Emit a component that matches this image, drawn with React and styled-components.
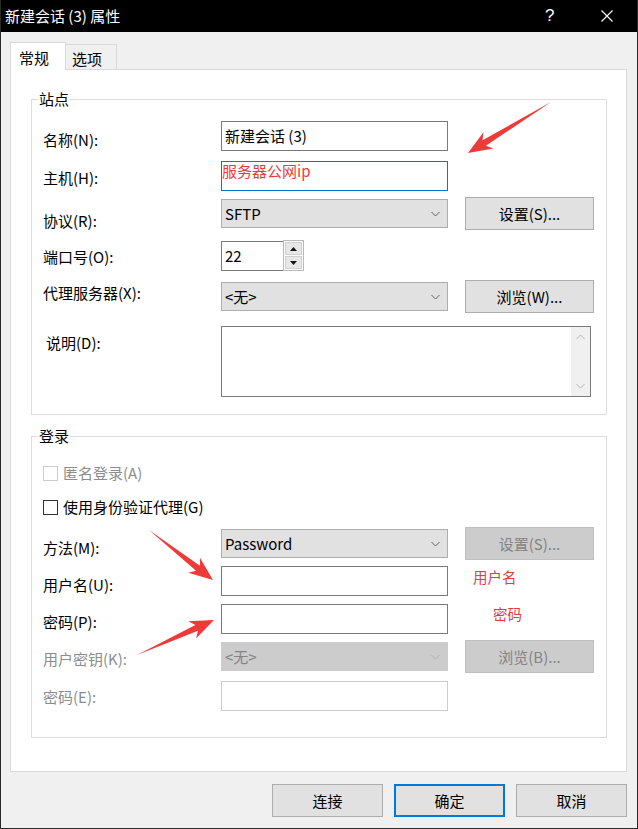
import React from "react";
import styled, { createGlobalStyle } from "styled-components";

const GlobalStyle = createGlobalStyle`
  html, body {
    margin: 0;
    padding: 0;
    background: #f0f0f0;
  }
  body {
    font-family: "Noto Sans CJK SC", "Noto Sans", sans-serif;
    font-size: 15px;
    color: #000;
  }
`;

const RED = "#ef3a3a";

const arrowPoints = (x1, y1, x2, y2) => {
  const dx = x2 - x1;
  const dy = y2 - y1;
  const len = Math.hypot(dx, dy);
  const ux = dx / len;
  const uy = dy / len;
  const nx = -uy;
  const ny = ux;
  const head = 24;
  const pt = (a, b) => `${x1 + ux * a + nx * b},${y1 + uy * a + ny * b}`;
  return [
    pt(0, 0),
    pt(len - head + 5, 3.2),
    pt(len - head, 9.5),
    pt(len, 0),
    pt(len - head, -9.5),
    pt(len - head + 5, -3.2),
  ].join(" ");
};

const Chevron = ({ up, color = "#606060" }) => (
  <svg width="9" height="6" viewBox="0 0 9 6">
    <polyline
      points={up ? "0.5,5 4.5,1 8.5,5" : "0.5,1 4.5,5 8.5,1"}
      fill="none"
      stroke={color}
      strokeWidth="1"
    />
  </svg>
);

const Triangle = ({ up }) => (
  <svg width="7" height="4" viewBox="0 0 7 4">
    <polygon points={up ? "3.5,0 7,4 0,4" : "0,0 7,0 3.5,4"} fill="#111" />
  </svg>
);

const App = () => (
  <>
    <GlobalStyle />
    <Window>
      <TitleBar>
        <TitleText>新建会话 (3) 属性</TitleText>
        <TitleHelp>?</TitleHelp>
        <TitleClose>
          <svg width="12" height="12" viewBox="0 0 12 12">
            <path d="M0.5 0.5 L11.5 11.5 M11.5 0.5 L0.5 11.5" stroke="#fff" strokeWidth="1.1" />
          </svg>
        </TitleClose>
      </TitleBar>

      <Body>
        <TabStrip>
          <Tab $active>常规</Tab>
          <Tab>选项</Tab>
        </TabStrip>

        <Panel>
          <Group>
            <GroupTitle>站点</GroupTitle>
            <Row $mt={12} $h={30}>
              <Label $dy={9}>名称(N):</Label>
              <TextBox>新建会话 (3)</TextBox>
            </Row>
            <Row $mt={10} $h={30}>
              <Label $dy={7}>主机(H):</Label>
              <TextBox $focus $top>
                <RedNote>服务器公网ip</RedNote>
              </TextBox>
            </Row>
            <Row $mt={6} $h={33}>
              <Label $dy={14}>协议(R):</Label>
              <Select>
                SFTP
                <Chevron />
              </Select>
              <Button>设置(S)...</Button>
            </Row>
            <Row $mt={11} $h={30}>
              <Label $dy={6}>端口号(O):</Label>
              <Spin>
                <SpinText>22</SpinText>
                <SpinButtons>
                  <SpinButton>
                    <Triangle up />
                  </SpinButton>
                  <SpinButton>
                    <Triangle />
                  </SpinButton>
                </SpinButtons>
              </Spin>
            </Row>
            <Row $mt={9} $h={33}>
              <Label $dy={3}>代理服务器(X):</Label>
              <Select>
                &lt;无&gt;
                <Chevron />
              </Select>
              <Button>浏览(W)...</Button>
            </Row>
            <Row $mt={13} $h={71}>
              <Label $dy={7} $indent={3}>说明(D):</Label>
              <TextArea>
                <ScrollBar>
                  <ScrollArrow>
                    <Chevron up color="#b4b4b4" />
                  </ScrollArrow>
                  <ScrollArrow>
                    <Chevron color="#b4b4b4" />
                  </ScrollArrow>
                </ScrollBar>
              </TextArea>
            </Row>
          </Group>

          <Group $mt={21} $pb={26}>
            <GroupTitle>登录</GroupTitle>
            <CheckRow $mt={17} $disabled>
              <CheckBox $disabled />
              匿名登录(A)
            </CheckRow>
            <CheckRow $mt={14}>
              <CheckBox />
              使用身份验证代理(G)
            </CheckRow>
            <Row $mt={10} $h={33}>
              <Label $dy={11}>方法(M):</Label>
              <Select>
                Password
                <Chevron />
              </Select>
              <Button $disabled>设置(S)...</Button>
            </Row>
            <Row $mt={6} $h={30}>
              <Label $dy={9}>用户名(U):</Label>
              <TextBox />
              <Note $left={25} $dy={1}>用户名</Note>
            </Row>
            <Row $mt={8} $h={30}>
              <Label $dy={8}>密码(P):</Label>
              <TextBox />
              <Note $left={45} $dy={0}>密码</Note>
            </Row>
            <Row $mt={6} $h={33}>
              <Label $dy={9} $disabled>用户密钥(K):</Label>
              <Select $disabled>
                &lt;无&gt;
                <Chevron color="#b0b0b0" />
              </Select>
              <Button $disabled>浏览(B)...</Button>
            </Row>
            <Row $mt={8} $h={30}>
              <Label $dy={6} $disabled>密码(E):</Label>
              <TextBox $disabled />
            </Row>
          </Group>
        </Panel>

        <Footer>
          <FooterButton>连接</FooterButton>
          <FooterButton $primary>确定</FooterButton>
          <FooterButton>取消</FooterButton>
        </Footer>
      </Body>

      <Overlay width="638" height="829" viewBox="0 0 638 829">
        <polygon points={arrowPoints(551, 102, 468, 153)} fill={RED} />
        <polygon points={arrowPoints(149, 530, 213, 580)} fill={RED} />
        <polygon points={arrowPoints(137, 655, 214, 620)} fill={RED} />
      </Overlay>
    </Window>
  </>
);
export default App;

const Window = styled.div`
  position: relative;
  width: 638px;
  height: 829px;
  box-sizing: border-box;
  border: 1px solid #2a2a2a;
  border-top: none;
  background: #f0f0f0;
  display: flex;
  flex-direction: column;
  overflow: hidden;
`;

const TitleBar = styled.div`
  height: 32px;
  margin: 0 -1px;
  background: #000;
  color: #fff;
  display: flex;
  align-items: center;
  padding-left: 5px;
  flex-shrink: 0;
`;

const TitleText = styled.span`
  font-size: 15px;
  line-height: 20px;
  flex: 1;
`;

const TitleHelp = styled.span`
  font-family: "Liberation Sans", sans-serif;
  font-size: 17px;
  width: 56px;
  text-align: left;
  padding-left: 2px;
`;

const TitleClose = styled.span`
  width: 37px;
  display: flex;
  align-items: center;
`;

const Body = styled.div`
  padding: 10px 10px 0 9px;
  display: flex;
  flex-direction: column;
`;

const TabStrip = styled.div`
  display: flex;
  align-items: flex-end;
  height: 27px;
`;

const Tab = styled.div`
  position: relative;
  z-index: 1;
  box-sizing: border-box;
  background: ${(p) => (p.$active ? "#fff" : "#f0f0f0")};
  border: 1px solid #d9d9d9;
  border-bottom: none;
  border-left: ${(p) => (p.$active ? "1px solid #d9d9d9" : "none")};
  width: ${(p) => (p.$active ? "56px" : "51px")};
  height: ${(p) => (p.$active ? "28px" : "25px")};
  margin-bottom: ${(p) => (p.$active ? "-1px" : "0")};
  padding-left: ${(p) => (p.$active ? "8px" : "6px")};
  padding-top: ${(p) => (p.$active ? "5px" : "4px")};
  line-height: 20px;
  font-size: 15px;
`;

const Panel = styled.div`
  background: #fff;
  border: 1px solid #d9d9d9;
  padding: 29px 19px 33px 20px;
`;

const Group = styled.div`
  border: 1px solid #dcdcdc;
  margin-top: ${(p) => p.$mt || 0}px;
  padding: 0 0 ${(p) => (p.$pb != null ? p.$pb : 17)}px 11px;
  display: flex;
  flex-direction: column;
`;

const GroupTitle = styled.div`
  align-self: flex-start;
  margin: -11px 0 0 -5px;
  padding: 0 1px;
  background: #fff;
  line-height: 20px;
`;

const Row = styled.div`
  display: flex;
  align-items: center;
  height: ${(p) => p.$h}px;
  margin-top: ${(p) => p.$mt}px;
`;

const Label = styled.div`
  align-self: flex-start;
  width: ${(p) => 178 - (p.$indent || 0)}px;
  padding-left: ${(p) => p.$indent || 0}px;
  margin-top: ${(p) => p.$dy}px;
  line-height: 20px;
  color: ${(p) => (p.$disabled ? "#8c8c8c" : "#000")};
  white-space: nowrap;
`;

const TextBox = styled.div`
  box-sizing: border-box;
  width: 227px;
  height: 30px;
  background: #fff;
  border: 1px solid
    ${(p) => (p.$focus ? "#0078d7" : p.$disabled ? "#cccccc" : "#7a7a7a")};
  display: flex;
  align-items: ${(p) => (p.$top ? "flex-start" : "center")};
  padding: ${(p) => (p.$top ? "0 0 0 0" : "0 3px")};
  line-height: 20px;
  white-space: nowrap;
`;

const RedNote = styled.span`
  color: #ec3b40;
  line-height: 18px;
`;

const Note = styled.span`
  align-self: flex-start;
  margin-top: ${(p) => p.$dy}px;
  margin-left: ${(p) => p.$left}px;
  color: #e63a3f;
  font-size: 14.5px;
  line-height: 20px;
`;

const Select = styled.div`
  box-sizing: border-box;
  width: 227px;
  height: 29px;
  background: ${(p) => (p.$disabled ? "#cccccc" : "#e1e1e1")};
  border: 1px solid ${(p) => (p.$disabled ? "#cccccc" : "#adadad")};
  color: ${(p) => (p.$disabled ? "#838383" : "#000")};
  display: flex;
  align-items: center;
  justify-content: space-between;
  padding: 0 7px 0 3px;
  line-height: 20px;
`;

const Button = styled.div`
  box-sizing: border-box;
  width: 129px;
  height: 33px;
  margin-left: 17px;
  background: ${(p) => (p.$disabled ? "#cccccc" : "#e1e1e1")};
  border: 1px solid ${(p) => (p.$disabled ? "#bfbfbf" : "#adadad")};
  color: ${(p) => (p.$disabled ? "#838383" : "#000")};
  display: flex;
  align-items: center;
  justify-content: center;
  line-height: 20px;
`;

const Spin = styled.div`
  display: flex;
  align-items: stretch;
  height: 30px;
`;

const SpinText = styled.div`
  box-sizing: border-box;
  width: 62px;
  border: 1px solid #7a7a7a;
  border-right: none;
  display: flex;
  align-items: center;
  padding-left: 3px;
  line-height: 20px;
`;

const SpinButtons = styled.div`
  box-sizing: border-box;
  width: 21px;
  margin-top: -1px;
  border: 1px solid #b9b9b9;
  display: flex;
  flex-direction: column;
  padding: 1px;
  gap: 1px;
`;

const SpinButton = styled.div`
  flex: 1;
  background: #e7e7e7;
  border: 1px solid #d0d0d0;
  display: flex;
  align-items: center;
  justify-content: center;
`;

const TextArea = styled.div`
  box-sizing: border-box;
  width: 370px;
  height: 71px;
  border: 1px solid #7a7a7a;
  background: #fff;
  display: flex;
  justify-content: flex-end;
`;

const ScrollBar = styled.div`
  width: 19px;
  background: #f0f0f0;
  display: flex;
  flex-direction: column;
  justify-content: space-between;
`;

const ScrollArrow = styled.div`
  height: 20px;
  display: flex;
  align-items: center;
  justify-content: center;
`;

const CheckRow = styled.div`
  display: flex;
  align-items: center;
  height: 20px;
  margin-top: ${(p) => p.$mt}px;
  gap: 5px;
  color: ${(p) => (p.$disabled ? "#8c8c8c" : "#000")};
  line-height: 20px;
`;

const CheckBox = styled.span`
  box-sizing: border-box;
  width: 15px;
  height: 15px;
  background: #fff;
  border: 1px solid ${(p) => (p.$disabled ? "#cccccc" : "#333")};
`;

const Footer = styled.div`
  display: flex;
  justify-content: flex-end;
  gap: 11px;
  margin-top: 12px;
  padding-right: 0;
`;

const FooterButton = styled.div`
  box-sizing: border-box;
  width: 111px;
  height: 33px;
  background: #e1e1e1;
  border: ${(p) => (p.$primary ? "2px solid #0078d7" : "1px solid #adadad")};
  display: flex;
  align-items: center;
  justify-content: center;
  line-height: 20px;
`;

const Overlay = styled.svg`
  position: absolute;
  left: -1px;
  top: 0;
  pointer-events: none;
`;
